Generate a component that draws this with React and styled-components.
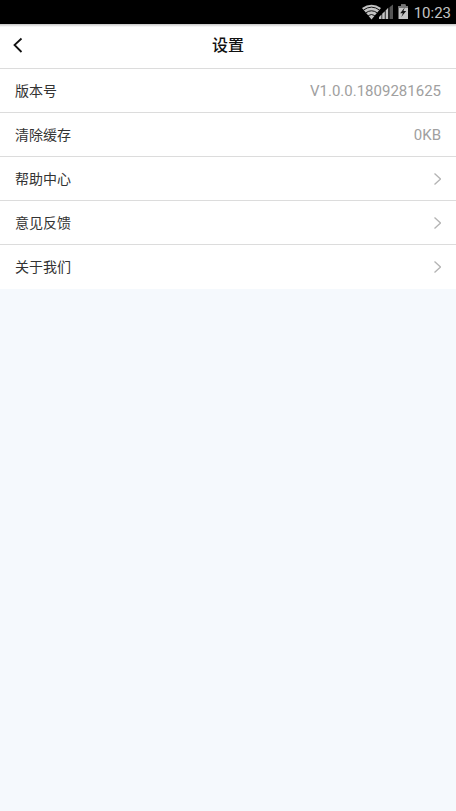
import React from 'react';
import styled, { createGlobalStyle } from 'styled-components';

const GlobalStyle = createGlobalStyle`
  * {
    box-sizing: border-box;
  }
  body {
    margin: 0;
    background: #f5f9fd;
    color: #333;
    font-family: Roboto, 'Noto Sans CJK SC', sans-serif;
  }
`;

const StatusBar = styled.div`
  display: flex;
  align-items: center;
  justify-content: flex-end;
  gap: 4px;
  height: 24px;
  padding: 1px 5px 0 0;
  background: #000;
  color: #c4c4c4;
  font-size: 15px;
  line-height: 24px;
`;

const Header = styled.header`
  display: grid;
  grid-template-columns: 36px 1fr 36px;
  align-items: center;
  height: 45px;
  background: linear-gradient(#c4c4c4, #fff 3px);
  border-bottom: 1px solid #dcdcdc;
`;

const BackButton = styled.button`
  display: flex;
  align-items: center;
  justify-content: center;
  height: 44px;
  padding: 0 0 2px;
  border: 0;
  background: none;
  color: #111;
  cursor: pointer;
`;

const Title = styled.h1`
  margin: 0;
  color: #111;
  font-size: 16px;
  font-weight: 500;
  line-height: 24px;
  text-align: center;
`;

const List = styled.ul`
  margin: 0;
  padding: 0;
  list-style: none;
  background: #fff;
`;

const Item = styled.li`
  border-bottom: 1px solid #dcdcdc;
  &:last-child {
    border-bottom-color: #fff;
  }
`;

const Row = styled.div`
  display: flex;
  align-items: center;
  justify-content: space-between;
  width: 100%;
  height: 43px;
  padding: 0 15px;
  border: 0;
  background: none;
  color: #333;
  font-family: inherit;
  font-size: 14px;
  line-height: 20px;
  text-align: left;
  text-decoration: none;
`;

const Value = styled.span`
  color: #a0a0a0;
  font-size: 15px;
`;

const items = [
  { label: '版本号', value: 'V1.0.0.1809281625' },
  { label: '清除缓存', value: '0KB', as: 'button' },
  { label: '帮助中心', href: '#help' },
  { label: '意见反馈', href: '#feedback' },
  { label: '关于我们', href: '#about' },
];

function StatusIcons() {
  return (
    <svg width="48" height="18" viewBox="0 0 48 18" aria-hidden="true">
      <path d="M0 4Q9.500-2.500 19 4L9.500 15.500Z" fill="#c4c4c4" />
      <path
        d="M1.500 6Q9.500 0.300 17.500 6M3.800 8.800Q9.500 4.800 15.200 8.800M6.200 11.600Q9.500 9.400 12.800 11.600"
        fill="none"
        stroke="#000"
        strokeWidth="0.900"
      />
      <path
        d="M17 13l2.500-2.500V15H17zM20.200 9.800l2.600-2.600V15h-2.600zM23.600 6.400L26.200 3.800V15h-2.600z"
        fill="#c4c4c4"
      />
      <path d="M27.500 3.200L31 0.500V15h-3.500z" fill="#555" />
      <path d="M36.500 2H39V0.500h4.500V2H46v13h-9.500z" fill="#c4c4c4" />
      <path d="M36.500 2H39V0.500h4.500V2H46v2h-9.500z" fill="#777" />
      <path d="M42.700 3.500l-4.500 5.700h2.700L39.300 13l4.900-6h-2.700z" fill="#111" />
    </svg>
  );
}

function BackIcon() {
  return (
    <svg width="10" height="16" viewBox="0 0 10 16" aria-hidden="true">
      <path d="M8.500 1.500L1.500 8L8.500 15" fill="none" stroke="currentColor" strokeWidth="1.800" />
    </svg>
  );
}

function ArrowIcon() {
  return (
    <svg width="8" height="12" viewBox="0 0 8 12" aria-hidden="true">
      <path d="M1.500 0.500L7.500 6L1.500 11.500" fill="none" stroke="#b4b4b4" strokeWidth="1.300" />
    </svg>
  );
}

function App() {
  return (
    <>
      <GlobalStyle />
      <StatusBar>
        <StatusIcons />
        <span>10:23</span>
      </StatusBar>
      <Header>
        <BackButton type="button" aria-label="返回">
          <BackIcon />
        </BackButton>
        <Title>设置</Title>
      </Header>
      <List>
        {items.map(({ label, value, href, as }) => (
          <Item key={label}>
            <Row as={href ? 'a' : as} href={href}>
              <span>{label}</span>
              {value ? <Value>{value}</Value> : <ArrowIcon />}
            </Row>
          </Item>
        ))}
      </List>
    </>
  );
}

export default App;
